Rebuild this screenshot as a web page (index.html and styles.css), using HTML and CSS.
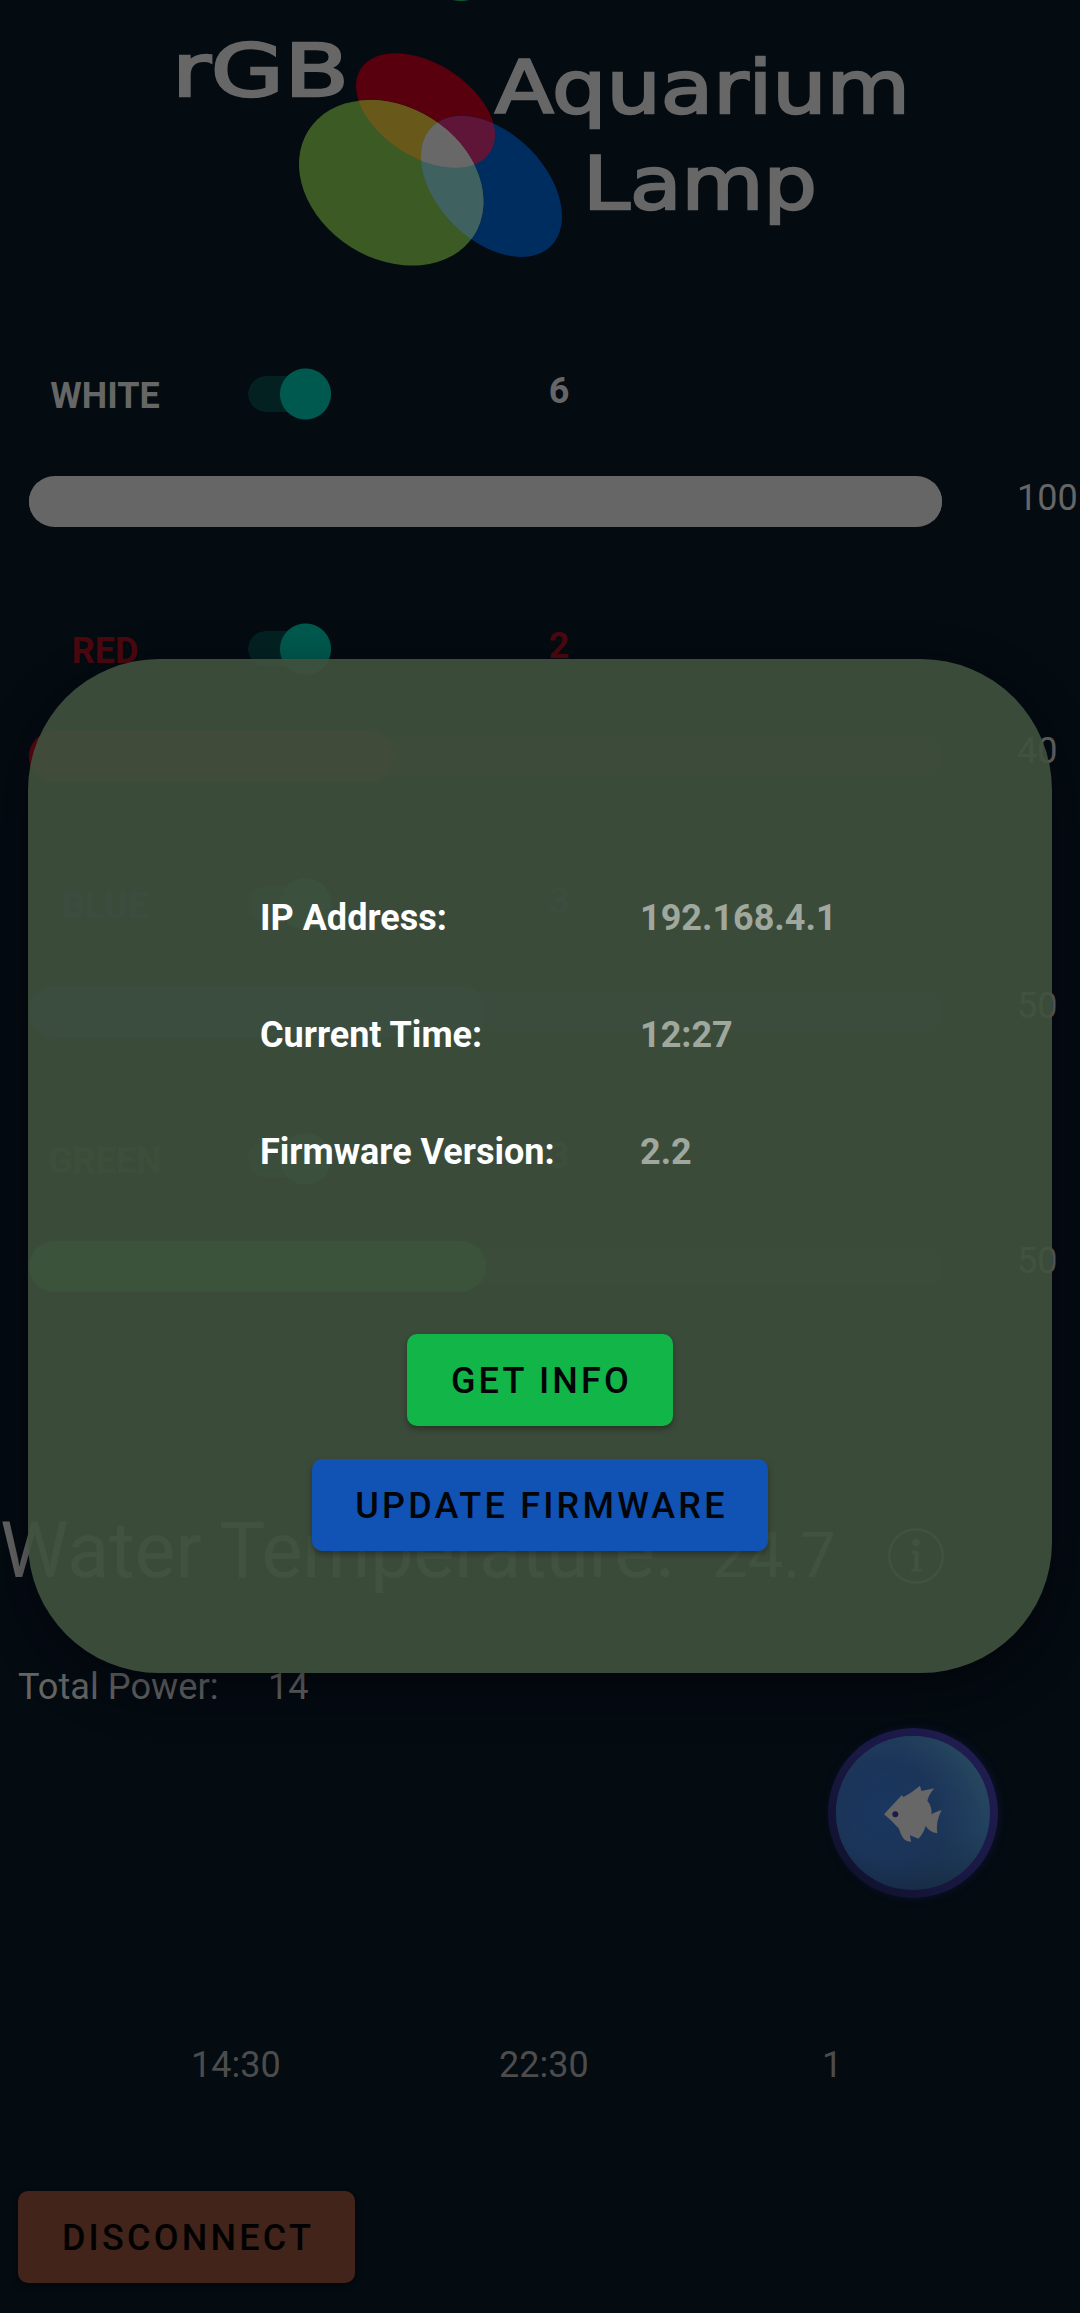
FILE: index.html
```html
<!DOCTYPE html>
<html lang="en">
<head>
<meta charset="utf-8">
<title>rGB Aquarium Lamp</title>
<link rel="stylesheet" href="styles.css">
</head>
<body>
<main class="screen">
  <header class="brand">
    <svg class="logo" viewBox="0 0 1080 340" width="1080" height="340">
      <defs>
        <clipPath id="clip-red"><ellipse cx="425.5" cy="110.5" rx="77" ry="46.6" transform="rotate(32.7 425.5 110.5)"/></clipPath>
        <clipPath id="clip-blue"><ellipse cx="491.5" cy="186.5" rx="84.1" ry="53.6" transform="rotate(45 491.5 186.5)"/></clipPath>
      </defs>
      <ellipse cx="461" cy="-4" rx="14" ry="5" fill="#0f5a35"/>
      <ellipse cx="425.5" cy="110.5" rx="77" ry="46.6" transform="rotate(32.7 425.5 110.5)" fill="#58000e"/>
      <ellipse cx="491.5" cy="186.5" rx="84.1" ry="53.6" transform="rotate(45 491.5 186.5)" fill="#002d60"/>
      <ellipse cx="391.2" cy="182.8" rx="98" ry="75.9" transform="rotate(32.3 391.2 182.8)" fill="#3c5a24"/>
      <g clip-path="url(#clip-red)">
        <ellipse cx="491.5" cy="186.5" rx="84.1" ry="53.6" transform="rotate(45 491.5 186.5)" fill="#5e1538"/>
        <ellipse cx="391.2" cy="182.8" rx="98" ry="75.9" transform="rotate(32.3 391.2 182.8)" fill="#68591b"/>
      </g>
      <g clip-path="url(#clip-blue)">
        <ellipse cx="391.2" cy="182.8" rx="98" ry="75.9" transform="rotate(32.3 391.2 182.8)" fill="#3f6260"/>
        <g clip-path="url(#clip-red)">
          <ellipse cx="391.2" cy="182.8" rx="98" ry="75.9" transform="rotate(32.3 391.2 182.8)" fill="#686868"/>
        </g>
      </g>
      <text class="wordmark" x="172" y="96" textLength="177" lengthAdjust="spacingAndGlyphs">rGB</text>
      <text class="wordmark" x="495" y="113" textLength="415" lengthAdjust="spacingAndGlyphs">Aquarium</text>
      <text class="wordmark" x="583" y="209" textLength="234" lengthAdjust="spacingAndGlyphs">Lamp</text>
    </svg>
  </header>

  <section class="channel white">
    <div class="channel-head">
      <span class="name">WHITE</span><span class="switch"></span><span class="power">6</span>
    </div>
    <div class="channel-level"><div class="track"><div class="fill" style="width:100%"></div></div><span class="level">100</span></div>
  </section>
  <section class="channel red">
    <div class="channel-head">
      <span class="name">RED</span><span class="switch"></span><span class="power">2</span>
    </div>
    <div class="channel-level"><div class="track"><div class="fill" style="width:40%"></div></div><span class="level">40</span></div>
  </section>
  <section class="channel blue">
    <div class="channel-head">
      <span class="name">BLUE</span><span class="switch"></span><span class="power">3</span>
    </div>
    <div class="channel-level"><div class="track"><div class="fill" style="width:50%"></div></div><span class="level">50</span></div>
  </section>
  <section class="channel green">
    <div class="channel-head">
      <span class="name">GREEN</span><span class="switch"></span><span class="power">3</span>
    </div>
    <div class="channel-level"><div class="track"><div class="fill" style="width:50%"></div></div><span class="level">50</span></div>
  </section>

  <div class="temperature">
    <span class="temp-label">Water Temperature:</span>
    <span class="temp-value">24.7</span>
    <svg class="info" viewBox="0 0 56 56" width="56" height="56" fill="none" stroke="#666">
      <circle cx="28" cy="28" r="26.7" stroke-width="2.2"/>
      <circle cx="28" cy="14.5" r="3.7" fill="#666" stroke="none"/>
      <path d="M23.5 24H28.5V42.5M23 42.5H33.5" stroke-width="2.6"/>
      <path d="M28.5 24V42.5" stroke-width="4.5"/>
    </svg>
  </div>

  <div class="total"><span class="total-label">Total Power:</span><span>14</span></div>

  <div class="fab-row">
    <div class="fab">
      <svg viewBox="85 83 510 510" width="170" height="170">
        <path fill="#676767" d="M253 342L306 285L312 290Q338 276 361 256L365 272L404 264Q389 280 383 301Q398 318 396 346L382 354Q398 336 426 329Q407 365 413 399Q390 396 378 377Q371 401 356 415L331 405Q331 415 335 424Q308 426 298 385Q280 364 253 342Z"/>
        <circle cx="287" cy="342" r="9" fill="#1b1c4c"/>
      </svg>
    </div>
  </div>

  <div class="schedule"><span>14:30</span><span>22:30</span><span>1</span></div>

  <button class="btn disconnect">DISCONNECT</button>

  <div class="dialog">
    <dl class="facts">
      <dt>IP Address:</dt><dd>192.168.4.1</dd>
      <dt>Current Time:</dt><dd>12:27</dd>
      <dt>Firmware Version:</dt><dd>2.2</dd>
    </dl>
    <button class="btn get-info">GET INFO</button>
    <button class="btn update">UPDATE FIRMWARE</button>
  </div>
</main>
</body>
</html>
```

FILE: styles.css
```css
* { box-sizing: border-box; }
body {
  margin: 0;
  background: #040b11;
  font-family: Roboto, "Liberation Sans", sans-serif;
  font-size: 36px;
  line-height: 44px;
  color: #666;
}
.screen {
  position: relative;
  width: 1080px;
  height: 2313px;
  overflow: hidden;
  display: flex;
  flex-direction: column;
}
.brand { height: 340px; flex: none; }
.logo { display: block; }
.wordmark {
  font-family: "DejaVu Sans", sans-serif;
  font-size: 73px;
  fill: #676767;
  stroke: #676767;
  stroke-width: 2.4px;
}

.channel { height: 255px; flex: none; padding-top: 28px; }
.channel-head { display: flex; align-items: flex-start; height: 107.5px; font-weight: 700; }
.name { width: 210px; margin-top: 6px; text-align: center; }
.switch {
  width: 83px;
  height: 52px;
  margin-left: 38px;
  background:
    radial-gradient(circle 26px at 57.5px 26px, #00594e 25px, transparent 26px),
    linear-gradient(#042122, #042122) 18px 8px / 50px 36px no-repeat,
    radial-gradient(circle 18px at 18px 26px, #042122 17.5px, transparent 18px);
}
.power { width: 200px; margin: 1px 0 0 128px; text-align: center; }
.channel-level { display: flex; align-items: flex-start; }
.track {
  width: 913px;
  height: 51px;
  margin-left: 29px;
  border-radius: 26px;
  background: linear-gradient(var(--rail), var(--rail)) 0 6px / 100% 39px no-repeat;
}
.fill { height: 51px; border-radius: 26px; background: var(--tint); }
.level { margin: -2px 0 0 75px; }
.white .level { margin-top: 0; }
.white { --tint: #666; --rail: #666; }
.red { --tint: #5c0710; --rail: #240f12; }
.red .channel-head { color: #4c080f; }
.blue { --tint: #0c2750; --rail: #091838; }
.blue .channel-head { color: #0c1c58; }
.green { --tint: #006428; --rail: #0a1814; }
.green .channel-head { color: #07381c; }

.temperature { display: flex; align-items: baseline; height: 90px; flex: none; margin-top: 146px; line-height: 90px; }
.temp-label { width: 712px; font-size: 77.2px; white-space: nowrap; }
.temp-value { width: 176px; font-size: 63.5px; }
.info { align-self: flex-start; margin-top: 22px; }

.total { display: flex; flex: none; margin-top: 69px; padding-left: 18px; font-size: 36.2px; }
.total-label { width: 250px; }

.fab-row { display: flex; justify-content: flex-end; flex: none; margin-top: 18.5px; padding-right: 82px; }
.fab {
  width: 170px;
  height: 170px;
  border-radius: 50%;
  border: 8px solid transparent;
  background:
    radial-gradient(circle at 32% 48%, #1a3760 0%, #1b3459 35%, rgba(30, 56, 90, 0) 75%) padding-box,
    linear-gradient(205deg, #28495f 10%, #21405e 45%, #132539 90%) padding-box,
    linear-gradient(225deg, #221e54, #1a1844 50%, #0e0f28) border-box;
  box-shadow: 2px 0 9px rgba(32, 28, 90, 0.35);
}
.fab svg { display: block; margin: -8px; }

.schedule { display: flex; flex: none; margin-top: 145px; padding-left: 191px; color: #4c4c4d; }
.schedule span { flex: none; width: 308px; }
.schedule span + span { width: 323px; }

.btn {
  height: 92px;
  flex: none;
  padding: 2px 0 0 3px;
  border: 0;
  border-radius: 10px;
  font: 500 36px/90px Roboto, "Liberation Sans", sans-serif;
  letter-spacing: 3.2px;
  color: #030508;
  box-shadow: 0 3px 6px rgba(0, 0, 0, 0.35);
}
.disconnect { width: 337px; margin: 104px 0 0 18px; background: #43241a; color: #020202; }

.dialog {
  position: absolute;
  left: 28px;
  top: 658.5px;
  width: 1024px;
  height: 1014px;
  padding-top: 237.5px;
  border-radius: 131px;
  background: rgba(64, 81, 61, 0.93);
  box-shadow: 0 16px 50px rgba(0, 0, 8, 0.45);
  display: flex;
  flex-direction: column;
  align-items: center;
}
.facts {
  display: grid;
  grid-template-columns: 380px 1fr;
  grid-auto-rows: 117px;
  width: 100%;
  height: 437.5px;
  margin: 0;
  padding-left: 232px;
  font-weight: 700;
  color: #fff;
}
.facts dd { margin: 0; color: #a0a89e; }
.get-info { width: 266px; background: #11b548; }
.update { width: 456px; margin-top: 33px; background: #1152b5; }
```
